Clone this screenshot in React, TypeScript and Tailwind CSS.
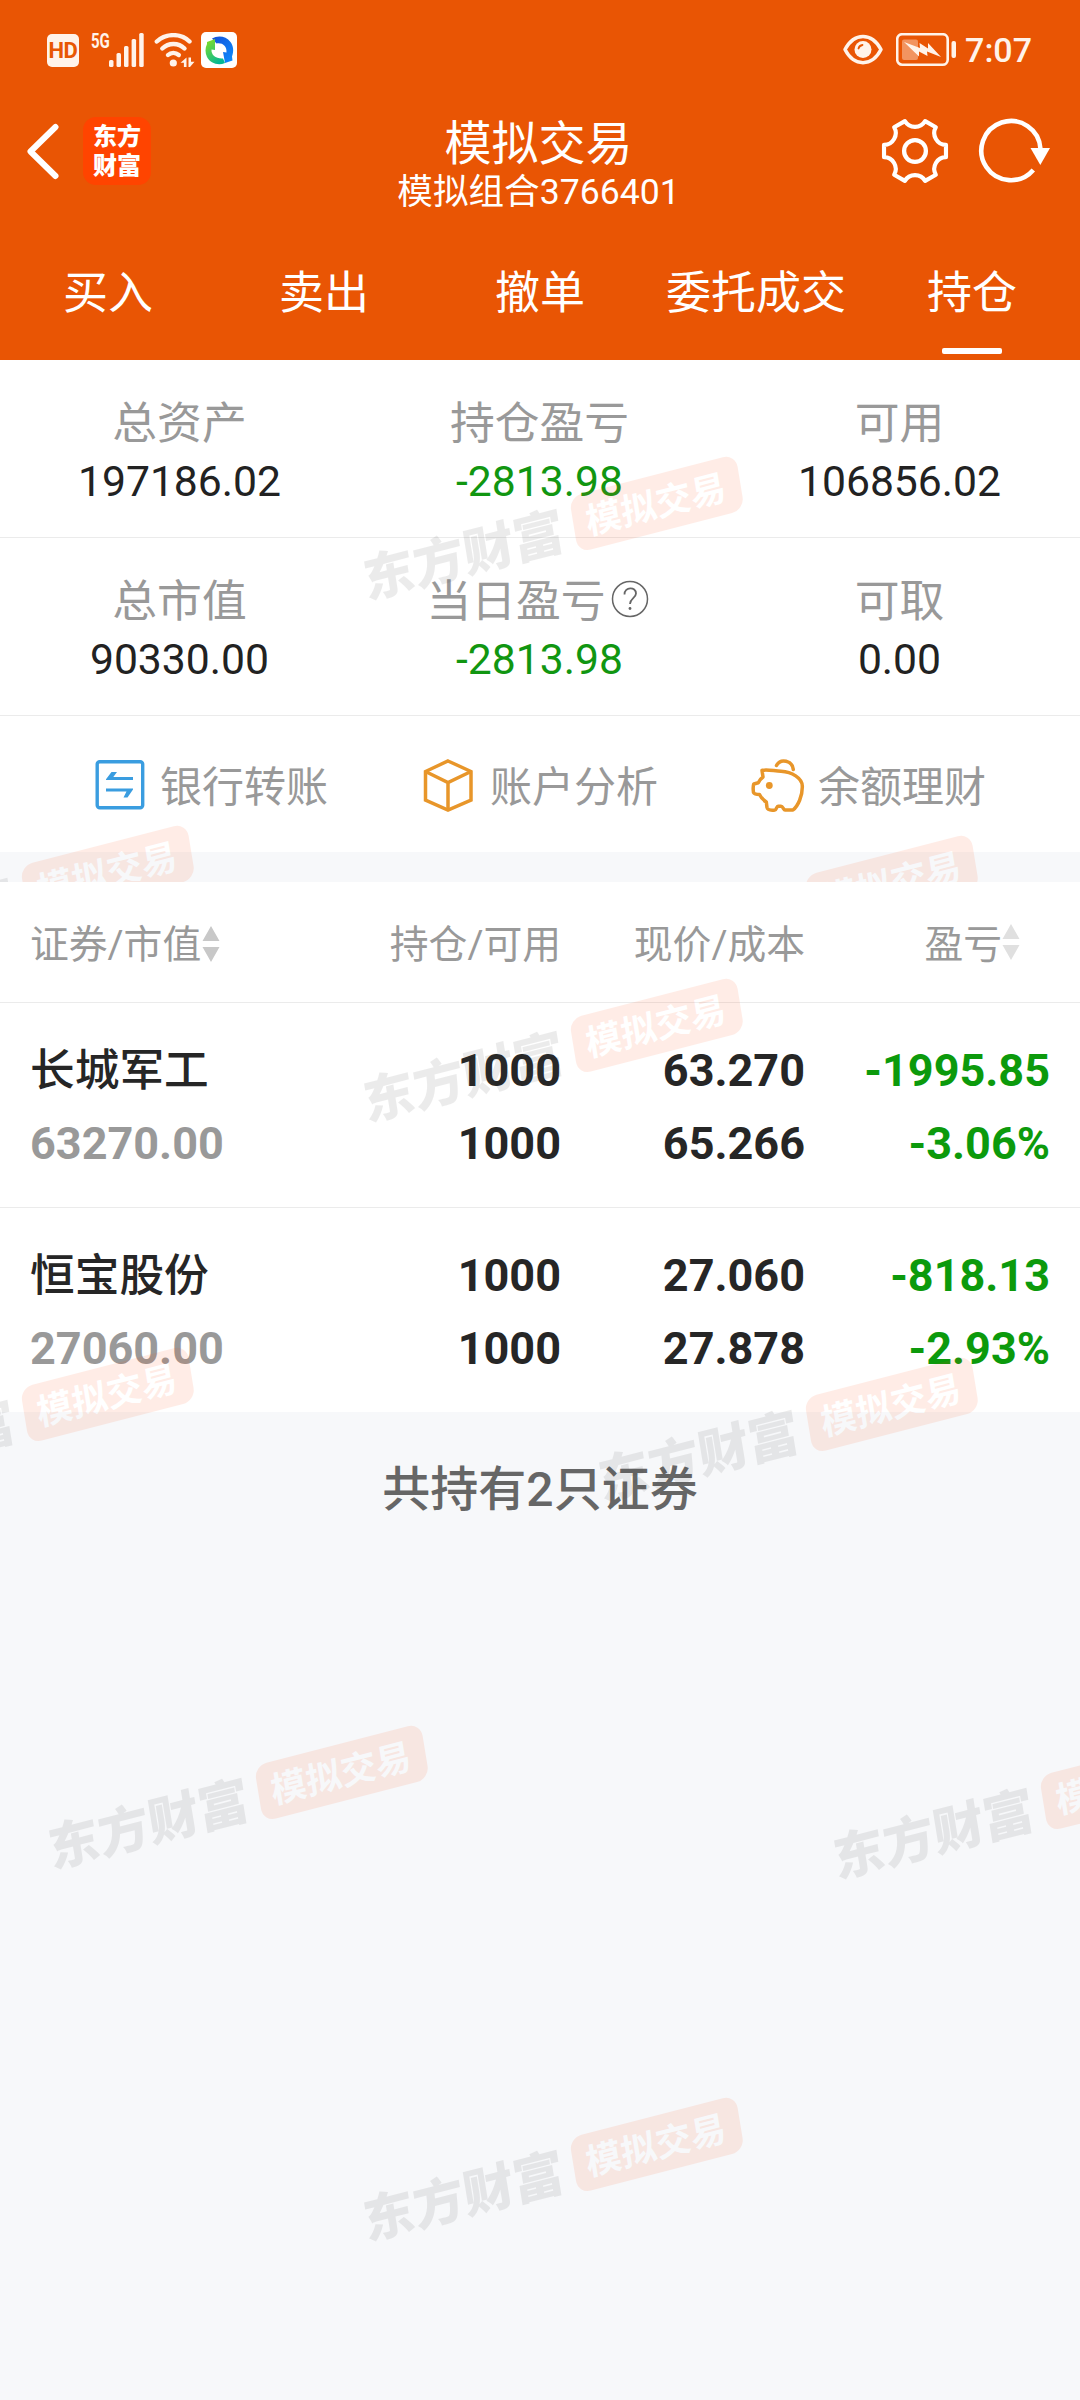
import React from "react";
import clsx from "clsx";

interface Stat {
  label: string;
  value: string;
  down?: boolean;
  help?: boolean;
}

interface Holding {
  name: string;
  marketValue: string;
  amount: string;
  available: string;
  price: string;
  cost: string;
  profit: string;
  profitRate: string;
}

const tabs = ["买入", "卖出", "撤单", "委托成交", "持仓"];
const activeTab = "持仓";

const statRows: Stat[][] = [
  [
    { label: "总资产", value: "197186.02" },
    { label: "持仓盈亏", value: "-2813.98", down: true },
    { label: "可用", value: "106856.02" },
  ],
  [
    { label: "总市值", value: "90330.00" },
    { label: "当日盈亏", value: "-2813.98", down: true, help: true },
    { label: "可取", value: "0.00" },
  ],
];

const holdings: Holding[] = [
  {
    name: "长城军工",
    marketValue: "63270.00",
    amount: "1000",
    available: "1000",
    price: "63.270",
    cost: "65.266",
    profit: "-1995.85",
    profitRate: "-3.06%",
  },
  {
    name: "恒宝股份",
    marketValue: "27060.00",
    amount: "1000",
    available: "1000",
    price: "27.060",
    cost: "27.878",
    profit: "-818.13",
    profitRate: "-2.93%",
  },
];

// Slanted brand watermark, x / y is the top left corner of its badge
function Watermark({ x, y }: { x: number; y: number }) {
  return (
    <svg
      className="pointer-events-none absolute overflow-visible opacity-10"
      style={{ left: x, top: y }}
      width="1"
      height="1"
    >
      <g transform="matrix(0.968 -0.25 0.16 0.98 0 0)">
        <text x="-217" y="49" fontSize="51.500" fontWeight="900" fill="#484848">
          东方财富
        </text>
        <rect width="172" height="57" rx="13" fill="#ff4e12" />
        <text x="13" y="42" fontSize="36" fontWeight="700" fill="#fff">
          模拟交易
        </text>
      </g>
    </svg>
  );
}

function StatusBar() {
  return (
    <div className="flex h-[98px] items-start justify-between pl-[47px] pr-[48px] pt-[32px] text-[#fff3ea]">
      <div className="flex">
        {/* HD */}
        <div className="mt-[2px] flex h-[33px] w-[32px] items-center justify-center rounded-[5px] bg-[#fff3ea] text-[22px] font-bold leading-none tracking-[-0.5px] text-[#e85703]">
          HD
        </div>
        {/* Signal */}
        <div className="relative ml-[12px] h-[36px] w-[54px]">
          <span className="absolute left-0 top-0 origin-left scale-x-75 text-[20px] font-bold leading-[18px]">5G</span>
          <svg className="absolute left-[18px] top-px" width="36" height="34" fill="currentColor">
            <rect x="0" y="27" width="4.5" height="7" rx="1.5" />
            <rect x="7.5" y="20" width="4.5" height="14" rx="1.5" />
            <rect x="15" y="13" width="4.5" height="21" rx="1.5" />
            <rect x="22.6" y="6" width="4.5" height="28" rx="1.5" />
            <rect x="30.2" y="0" width="4.5" height="34" rx="1.5" />
          </svg>
        </div>
        {/* Wifi */}
        <svg className="ml-[9px] mt-px" width="42" height="35" fill="none" stroke="currentColor" strokeWidth="4.4" strokeLinecap="round">
          <path d="M2.800 8.500C12 0 27 0 35.500 8.500" />
          <path d="M8.300 15.500C14.500 9.500 24.500 9.500 30.500 15.500" />
          <path d="M14 22C17 19.200 21.500 19.200 24.800 22" />
          <circle cx="19.300" cy="30" r="3.600" fill="currentColor" stroke="none" />
          <path d="M32.500 24.500V34h-2.600v-4.200H26.500zM34.500 24.500h2.500v4.200H40.500L36 34H34.500z" fill="currentColor" stroke="none" />
        </svg>
        {/* Running app */}
        <svg className="ml-[5px]" width="36" height="36">
          <defs>
            <linearGradient id="ringBlue" x1="0" y1="0" x2="1" y2="1">
              <stop offset="0" stopColor="#1650d8" />
              <stop offset="1" stopColor="#0b8dff" />
            </linearGradient>
            <linearGradient id="ringGreen" x1="0" y1="0" x2="0.6" y2="1">
              <stop offset="0" stopColor="#8be01e" />
              <stop offset="1" stopColor="#04b795" />
            </linearGradient>
          </defs>
          <rect width="36" height="36" rx="5" fill="#fff" />
          <path d="M11 6.500C17 3 25 4 29.500 10C32.500 14 33 19 31 24.500L31.500 28.500L24 31L22 20L25.500 20.500C26 14 21.500 10.500 15.500 11.500Z" fill="url(#ringBlue)" />
          <path d="M6 10L14 7V18L10.500 17.500C10 23 15 27 22 26.500L24 31C17 34 9 31 6 25C4 21 4 16 6 12Z" fill="url(#ringGreen)" />
        </svg>
      </div>
      <div className="flex items-start">
        <svg className="mt-[2px]" width="40" height="31" fill="none" stroke="currentColor" strokeWidth="3.500">
          <path d="M2 15.500C11 -2 29 -2 38 15.500C29 33 11 33 2 15.500Z" strokeLinejoin="round" />
          <circle cx="20" cy="15.500" r="8.500" fill="currentColor" stroke="none" />
          <path d="M15.500 14.500C16 12.500 17.500 11.300 19.500 11" stroke="#e85703" strokeWidth="1.800" strokeLinecap="round" />
        </svg>
        <svg className="ml-[13px] mt-px" width="62" height="34" fill="currentColor">
          <rect x="1.200" y="1.200" width="50.500" height="30.500" rx="5" fill="none" stroke="currentColor" strokeWidth="2.600" />
          <rect x="6" y="6.500" width="16" height="20.500" rx="2" opacity="0.400" />
          <path d="M8 9L24 15L23.500 10L32 15.500V10L45 24L31 18.500L31.500 23L23 18.500V23.500Z" />
          <rect x="55.500" y="8" width="4.500" height="17" rx="2" />
        </svg>
        <span className="ml-[7px] text-[34px] font-medium leading-[37px]">7:07</span>
      </div>
    </div>
  );
}

function TitleBar() {
  return (
    <div className="flex h-[128px] items-start justify-between pl-[26px] pr-[29px]">
      <div className="flex w-[240px]">
        <svg className="mt-[24px]" width="36" height="58" fill="none" stroke="#fff" strokeWidth="6" strokeLinecap="round" strokeLinejoin="round">
          <path d="M29.500 5L4.500 29.500L29.500 54" />
        </svg>
        <div className="ml-[21px] mt-[19px] flex h-[68px] w-[68px] flex-col items-center justify-center rounded-[13px] bg-[#ff4400] pt-[2px] text-[24px] font-black leading-[29px] text-white">
          <span>东方</span>
          <span>财富</span>
        </div>
      </div>
      <div className="mt-[19px] text-center text-white">
        <h1 className="text-[47px] leading-[54px]">模拟交易</h1>
        <p className="text-[35.6px] leading-[43px]">模拟组合3766401</p>
      </div>
      <div className="mt-[18px] flex w-[240px] justify-end">
        <svg width="70" height="70" fill="none" stroke="#fff" strokeWidth="4.300" strokeLinejoin="round">
          <path
            transform="translate(35 35) scale(0.965)"
            d="M-10.500 -31C-6 -23 6 -23 10.500 -31L21.600 -24.600C16.900 -16.700 22.900 -6.300 32.100 -6.400V6.400C22.900 6.300 16.900 16.700 21.600 24.600L10.500 31C6 23 -6 23 -10.500 31L-21.600 24.600C-16.900 16.700 -22.900 6.300 -32.100 6.400V-6.400C-22.900 -6.300 -16.900 -16.700 -21.600 -24.600Z"
          />
          <circle cx="35" cy="35" r="10.900" />
        </svg>
        <svg className="ml-[27px]" width="74" height="70" fill="none" stroke="#fff" strokeWidth="4.600">
          <path d="M56.300 54A29.600 29.600 0 1 1 63.500 33" />
          <path d="M53.500 32H73L63.300 49Z" fill="#fff" stroke="none" />
        </svg>
      </div>
    </div>
  );
}

function Tabs() {
  return (
    <div className="grid h-[134px] grid-cols-5 text-[45px] text-white">
      {tabs.map((tab) => (
        <div key={tab} className="flex flex-col items-center pt-[38px]">
          <span className="leading-[60px]">{tab}</span>
          {tab === activeTab && <i className="mt-[24px] h-[6px] w-[60px] rounded-[2px] bg-white" />}
        </div>
      ))}
    </div>
  );
}

function StatCell({ label, value, down, help }: Stat) {
  return (
    <div className="flex flex-col items-center pt-[36px]">
      <div className={clsx("flex items-center text-[44.8px] leading-[56px] text-[#999]", help ? "pr-[5px]" : "pr-px")}>
        {label}
        {help && (
          <svg className="mb-[7px] ml-[5px]" width="38" height="38" fill="none" stroke="#666" strokeWidth="1.500">
            <circle cx="19" cy="19" r="17.500" />
            <path d="M13.500 14.500C13.500 6.500 25 6.500 25 13.500C25 18 19 18.500 19 24" strokeWidth="1.800" />
            <circle cx="19" cy="28.500" r="1.400" fill="#666" stroke="none" />
          </svg>
        )}
      </div>
      <div className={clsx("mt-px pr-px text-[42.7px] leading-[56px]", down ? "text-[#119611]" : "text-[#222]")}>{value}</div>
    </div>
  );
}

function Actions() {
  return (
    <div className="flex h-[136px] items-center pl-[94px] pt-[2px] text-[42px] leading-[56px] text-[#999]">
      <div className="flex w-[328px] items-center">
        <svg width="52" height="54" fill="none" stroke="#3a9de0" strokeWidth="3.400">
          <rect x="3.200" y="3.700" width="45.500" height="46" rx="2.500" />
          <path d="M12 21.300L17.500 14H23L19.300 19H39V22H12Z" fill="#3a9de0" stroke="none" />
          <path d="M39 31.500L33.500 39.500H29.500L32.500 33.500H12V30.500H39Z" fill="#3a9de0" stroke="none" />
        </svg>
        <span className="ml-[14px] pt-[6px]">银行转账</span>
      </div>
      <div className="flex w-[327px] items-center">
        <svg width="52" height="54" fill="none" stroke="#e8962a" strokeWidth="3.500" strokeLinejoin="miter">
          <path d="M26 3L49 13.500V42L26 52L3.500 42V13.500Z" />
          <path d="M3.500 13.500L26 24.500L49 13.500M26 24.500V52" />
        </svg>
        <span className="ml-[16px] pt-[6px]">账户分析</span>
      </div>
      <div className="flex items-center">
        <svg width="56" height="54" fill="none" stroke="#e8962a" strokeWidth="3.500" strokeLinecap="round" strokeLinejoin="round">
          <path d="M13 12.500C17 11 25 13 32 13.300C43 14 53 20 53.300 28C53.600 38 49 48 44 52H36C34.500 52 34 48.300 32 48.300H29C27.500 48.300 27.500 52 26 52C22 52.500 18.500 52 18 49.500L17.300 44C14 42 12 39.500 10.500 36.500C8.500 36.500 5.500 36.500 4.500 34.500C4 31 4 28 4.800 26L9.300 24.700C10.500 22 12 20.500 14 19Z" />
          <path d="M27.500 7.500C31.500 0 43.500 2.500 44.300 11.500" />
          <circle cx="20.300" cy="27.500" r="3.400" fill="#e8962a" stroke="none" />
        </svg>
        <span className="ml-[13px] pt-[6px]">余额理财</span>
      </div>
    </div>
  );
}

function SortIcon({ className }: { className?: string }) {
  return (
    <svg className={className} width="18" height="36" fill="currentColor">
      <path d="M9 0L17.500 15H0.500ZM9 36L17.500 21H0.500Z" />
    </svg>
  );
}

function HoldingsHeader() {
  return (
    <div className="flex h-[121px] border-b border-[#ebebeb] px-[30px] pt-[36px] text-[38.8px] leading-[54px] text-[#999]">
      <div className="flex w-[251px]">
        证券/市值
        <SortIcon className="ml-px mt-[8px] text-[#c8c8c8]" />
      </div>
      <div className="w-[280px] text-right">持仓/可用</div>
      <div className="w-[244px] text-right">现价/成本</div>
      <div className="flex flex-1 justify-end pr-[30px]">
        盈亏
        <SortIcon className="mt-[6px] text-[#e0e0e0]" />
      </div>
    </div>
  );
}

function HoldingRow({ item }: { item: Holding }) {
  return (
    <div className="flex px-[30px] pt-[31px] text-[45px] font-bold leading-[73px] text-[#262626]">
      <div className="w-[251px]">
        <p className="pt-[2px] text-[44.7px] font-medium leading-[71px]">{item.name}</p>
        <p className="text-[#999]">{item.marketValue}</p>
      </div>
      <div className="w-[280px] text-right">
        <p>{item.amount}</p>
        <p>{item.available}</p>
      </div>
      <div className="w-[244px] text-right">
        <p>{item.price}</p>
        <p>{item.cost}</p>
      </div>
      <div className="flex-1 text-right text-[#0c9a0c]">
        <p>{item.profit}</p>
        <p>{item.profitRate}</p>
      </div>
    </div>
  );
}

export default function App() {
  return (
    <div className="h-[2400px] w-[1080px] overflow-hidden bg-[#f7f8fa] font-['Roboto','Noto_Sans_CJK_SC',sans-serif]">
      <header className="bg-[#e95504]">
        <StatusBar />
        <TitleBar />
        <Tabs />
      </header>

      {/* Account summary */}
      <section className="relative h-[522px] overflow-hidden">
        <div className="bg-white">
          {statRows.map((row, i) => (
            <div key={i} className="grid h-[178px] grid-cols-3 border-b border-[#ebebeb]">
              {row.map((stat) => (
                <StatCell key={stat.label} {...stat} />
              ))}
            </div>
          ))}
          <Actions />
        </div>
        <Watermark x={569} y={137} />
        <Watermark x={20} y={506} />
        <Watermark x={804} y={516} />
      </section>

      {/* Holdings */}
      <section className="relative h-[1518px] overflow-hidden">
        <div className="bg-white">
          <HoldingsHeader />
          {holdings.map((item, i) => (
            <div key={item.name} className={i < holdings.length - 1 ? "h-[205px] border-b border-[#ebebeb]" : "h-[204px]"}>
              <HoldingRow item={item} />
            </div>
          ))}
        </div>
        <p className="pt-[46px] text-center text-[48px] font-medium leading-[64px] text-[#666]">共持有2只证券</p>
        <Watermark x={569} y={137} />
        <Watermark x={20} y={506} />
        <Watermark x={804} y={516} />
        <Watermark x={254} y={884} />
        <Watermark x={1039} y={894} />
        <Watermark x={569} y={1256} />
      </section>
    </div>
  );
}
